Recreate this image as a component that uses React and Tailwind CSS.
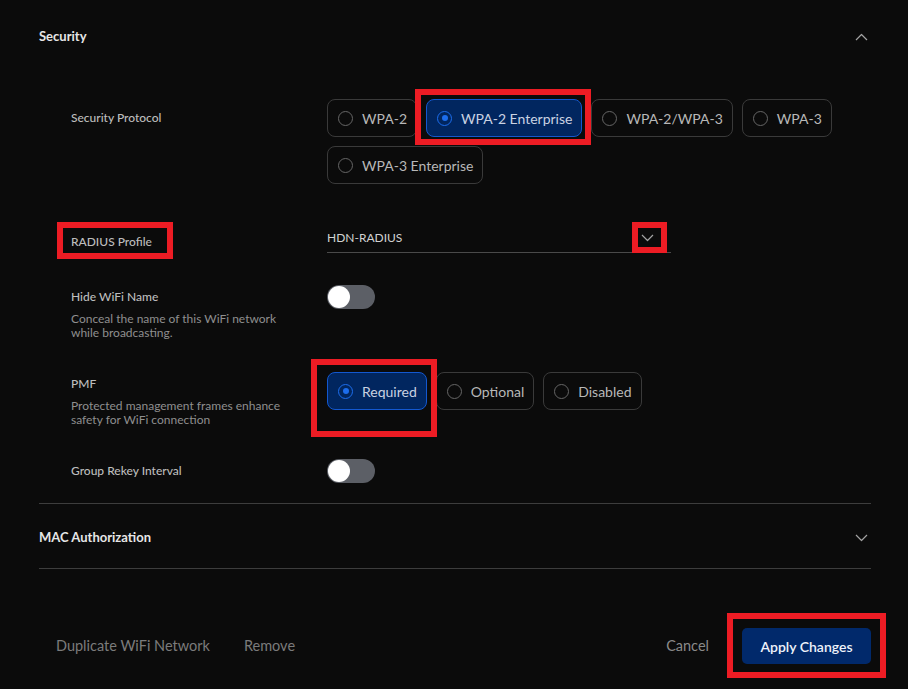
import React from "react";

// red annotation frame drawn over an element
function Mark({ className, children }) {
  return (
    <div className="relative w-fit">
      {children}
      <span className={`pointer-events-none absolute border-[6px] border-[#ed1c24] ${className}`} />
    </div>
  );
}

function Chevron({ up }) {
  return (
    <svg width="13" height="8" viewBox="0 0 13 8" fill="none">
      <polyline
        points={up ? "1,7 6.5,1.5 12,7" : "1,1 6.5,6.5 12,1"}
        stroke="#a3a3a3"
        strokeWidth="1.2"
        strokeLinejoin="round"
      />
    </svg>
  );
}

function Pill({ label, selected }) {
  return (
    <div
      className={`flex h-[38px] items-center gap-[9px] rounded-lg border pl-[10px] pr-[9px] text-[14px] ${
        selected
          ? "border-[#1358d0] bg-[#01265f] text-[#c9d2e2]"
          : "border-[#3a3a3a] text-[#b8b8b8]"
      }`}
    >
      {selected ? (
        <span className="flex h-[15px] w-[15px] items-center justify-center rounded-full border border-[#1c6ded]">
          <span className="h-[6px] w-[6px] rounded-full bg-[#1c6ded]" />
        </span>
      ) : (
        <span className="h-[15px] w-[15px] rounded-full border border-[#666666]" />
      )}
      <span>{label}</span>
    </div>
  );
}

function Toggle() {
  return (
    <div className="flex h-[24px] w-[48px] items-center rounded-full bg-[#5c5f66] px-[1px]">
      <span className="h-[22px] w-[22px] rounded-full bg-white" />
    </div>
  );
}

function Label({ title, desc }) {
  return (
    <div className="pt-[5px]">
      <div className="text-[12px] font-medium leading-[14px] text-[#bdbdbd]">{title}</div>
      {desc && (
        <div className="mt-2 w-[215px] text-[12px] leading-[14px] text-[#8f8f8f]">{desc}</div>
      )}
    </div>
  );
}

export default function App() {
  return (
    <div className="min-h-screen bg-[#0b0b0b] pl-[39px] pr-[37px] font-['Lato',sans-serif]">
      {/* Security header */}
      <div className="flex h-[72px] items-center justify-between pt-[2px]">
        <h2 className="text-[13px] font-bold text-[#e6e6e6]">Security</h2>
        <div className="flex w-5 justify-center">
          <Chevron up />
        </div>
      </div>

      <div className="pl-[32px]">
        {/* Security Protocol */}
        <div className="mt-[27px] grid grid-cols-[256px_1fr]">
          <div className="flex h-[38px] items-center text-[12px] font-medium text-[#bdbdbd]">
            Security Protocol
          </div>
          <div className="flex flex-wrap gap-x-[9px] gap-y-[9px]">
            <Pill label="WPA-2" />
            <Mark className="-left-[11px] -right-[9px] -top-[10px] -bottom-[8px]">
              <Pill label="WPA-2 Enterprise" selected />
            </Mark>
            <Pill label="WPA-2/WPA-3" />
            <Pill label="WPA-3" />
            <Pill label="WPA-3 Enterprise" />
          </div>
        </div>

        {/* RADIUS Profile */}
        <div className="mt-[38px] grid grid-cols-[256px_1fr]">
          <div className="pt-[13px]">
            <Mark className="-left-[14px] -right-[21px] -top-[13px] -bottom-[10px]">
              <div className="text-[12px] font-medium leading-[14px] text-[#bdbdbd]">RADIUS Profile</div>
            </Mark>
          </div>
          <div className="relative flex h-[31px] w-[344px] items-center justify-between border-b border-[#4a4a4a] pt-[2px]">
            <span className="text-[12px] text-[#d2d2d2]">HDN-RADIUS</span>
            <span className="mr-[17px] flex w-[13px] justify-center">
              <Chevron />
            </span>
            <span className="pointer-events-none absolute left-[305px] top-0 h-[31px] w-[35px] border-[6px] border-[#ed1c24]" />
          </div>
        </div>

        {/* Hide WiFi Name */}
        <div className="mt-[32px] grid grid-cols-[256px_1fr]">
          <Label title="Hide WiFi Name" desc="Conceal the name of this WiFi network while broadcasting." />
          <div>
            <Toggle />
          </div>
        </div>

        {/* PMF */}
        <div className="mt-[32px] grid grid-cols-[256px_1fr]">
          <Label title="PMF" desc="Protected management frames enhance safety for WiFi connection" />
          <div className="flex gap-[9px]">
            <Mark className="-left-[16px] -right-[10px] -top-[13px] -bottom-[10px]">
              <Pill label="Required" selected />
            </Mark>
            <Pill label="Optional" />
            <Pill label="Disabled" />
          </div>
        </div>

        {/* Group Rekey Interval */}
        <div className="mt-[32px] grid grid-cols-[256px_1fr]">
          <Label title="Group Rekey Interval" />
          <div>
            <Toggle />
          </div>
        </div>
      </div>

      {/* MAC Authorization */}
      <div className="mt-[20px] flex h-[66px] items-center justify-between border-y border-[#3d3d3d] pt-[3px]">
        <h2 className="text-[13px] font-bold text-[#e6e6e6]">MAC Authorization</h2>
        <div className="flex w-5 justify-center">
          <Chevron />
        </div>
      </div>

      {/* Footer */}
      <div className="mt-[59px] flex h-[36px] items-center justify-between">
        <div className="flex items-center gap-[34px] pl-[17px] text-[14.5px] text-[#7b7b7b]">
          <button>Duplicate WiFi Network</button>
          <button>Remove</button>
        </div>
        <div className="flex items-center gap-[33px]">
          <button className="text-[14.5px] text-[#8a8a8a]">Cancel</button>
          <Mark className="-left-[15px] -right-[15px] -top-[15px] -bottom-[14px]">
            <button className="h-[36px] w-[129px] rounded-[5px] bg-[#01296b] text-[14px] font-semibold text-[#eef2fa]">
              Apply Changes
            </button>
          </Mark>
        </div>
      </div>
    </div>
  );
}
